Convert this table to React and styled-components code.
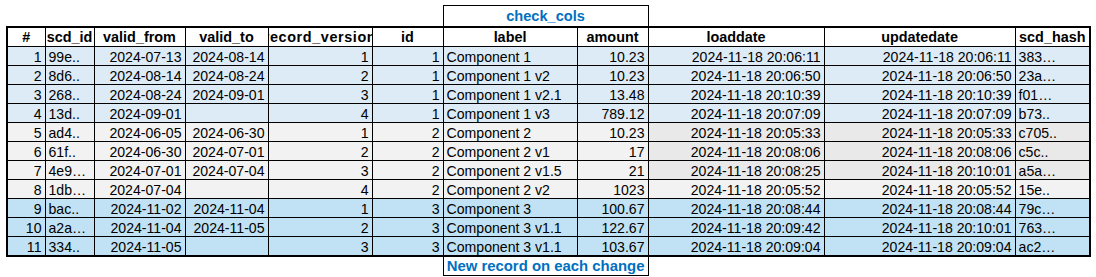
import React from 'react';
import styled, { createGlobalStyle } from 'styled-components';

const GlobalStyle = createGlobalStyle`
    body {
        margin: 0;
        background: #ffffff;
        font-family: "Liberation Sans", Arial, sans-serif;
    }
`;

const columns = [
    { key: 'n', title: '#', width: 38, align: 'right' },
    { key: 'scd', title: 'scd_id', width: 49, align: 'left' },
    { key: 'from', title: 'valid_from', width: 91, align: 'right' },
    { key: 'to', title: 'valid_to', width: 83, align: 'right' },
    { key: 'ver', title: 'record_version', width: 104, align: 'right', tight: true },
    { key: 'id', title: 'id', width: 71, align: 'right' },
    { key: 'label', title: 'label', width: 134, align: 'left' },
    { key: 'amount', title: 'amount', width: 71, align: 'right' },
    { key: 'load', title: 'loaddate', width: 176, align: 'right' },
    { key: 'upd', title: 'updatedate', width: 191, align: 'right' },
    { key: 'hash', title: 'scd_hash', width: 75, align: 'left' },
];

const groupColors = {
    1: '#DDEBF7',
    2: '#F2F2F2',
    3: '#C0E2F4',
};

const d = '2024-11-18 ';

const rows = [
    ['99e..', '2024-07-13', '2024-08-14', 1, 1, 'Component 1', '10.23', d + '20:06:11', d + '20:06:11', '383…'],
    ['8d6..', '2024-08-14', '2024-08-24', 2, 1, 'Component 1 v2', '10.23', d + '20:06:50', d + '20:06:50', '23a…'],
    ['268..', '2024-08-24', '2024-09-01', 3, 1, 'Component 1 v2.1', '13.48', d + '20:10:39', d + '20:10:39', 'f01…'],
    ['13d..', '2024-09-01', '', 4, 1, 'Component 1 v3', '789.12', d + '20:07:09', d + '20:07:09', 'b73..'],
    ['ad4..', '2024-06-05', '2024-06-30', 1, 2, 'Component 2', '10.23', d + '20:05:33', d + '20:05:33', 'c705..'],
    ['61f..', '2024-06-30', '2024-07-01', 2, 2, 'Component 2 v1', '17', d + '20:08:06', d + '20:08:06', 'c5c..'],
    ['4e9…', '2024-07-01', '2024-07-04', 3, 2, 'Component 2 v1.5', '21', d + '20:08:25', d + '20:10:01', 'a5a…'],
    ['1db…', '2024-07-04', '', 4, 2, 'Component 2 v2', '1023', d + '20:05:52', d + '20:05:52', '15e..'],
    ['bac..', '2024-11-02', '2024-11-04', 1, 3, 'Component 3', '100.67', d + '20:08:44', d + '20:08:44', '79c…'],
    ['a2a…', '2024-11-04', '2024-11-05', 2, 3, 'Component 3 v1.1', '122.67', d + '20:09:42', d + '20:10:01', '763…'],
    ['334..', '2024-11-05', '', 3, 3, 'Component 3 v1.1', '103.67', d + '20:09:04', d + '20:09:04', 'ac2…'],
];

const tableWidth = columns.reduce((sum, col) => sum + col.width, 0) + 1;

const Page = styled.div`
    padding: 5px 0 0 6px;
`;

const Sheet = styled.table`
    width: ${props => props.$w}px;
    border-collapse: collapse;
    table-layout: fixed;
    border-spacing: 0;
    td, th {
        box-sizing: border-box;
    }
`;

const NoteRow = styled.tr`
    height: ${props => props.$h}px;
`;

const Blank = styled.td`
    padding: 0;
    border: none;
`;

const Note = styled.td`
    padding: 0;
    border: 1px solid #000;
    color: #0070C0;
    font-weight: 700;
    font-size: ${props => props.$size}px;
    text-align: center;
    vertical-align: middle;
    white-space: nowrap;
    overflow: hidden;
`;

const HeadRow = styled.tr`
    height: 20px;
`;

const Head = styled.th`
    padding: 0;
    border: 1px solid #000;
    border-top: 2px solid #000;
    border-left-width: ${props => props.$first ? 2 : 1}px;
    border-right-width: ${props => props.$last ? 2 : 1}px;
    font-size: 14.4px;
    font-weight: 700;
    color: #000;
    vertical-align: middle;
    overflow: hidden;
`;

const Clip = styled.div`
    display: flex;
    justify-content: center;
    overflow: hidden;
    white-space: nowrap;
    letter-spacing: ${props => props.$tight ? '0.6px' : 'normal'};
`;

const DataRow = styled.tr`
    height: 19px;
    background: ${props => props.$bg};
`;

const Cell = styled.td`
    padding: 0 3px 1px 3px;
    border: 1px solid #000;
    border-left-width: ${props => props.$first ? 2 : 1}px;
    border-right-width: ${props => props.$last ? 2 : 1}px;
    border-bottom-width: ${props => props.$bottom ? 2 : 1}px;
    background: ${props => props.$shade || 'transparent'};
    font-size: 14.1px;
    line-height: 13px;
    color: #000;
    text-align: ${props => props.$align};
    vertical-align: bottom;
    white-space: nowrap;
    overflow: hidden;
`;

const shadedCols = ['load', 'upd', 'hash'];

const App = () => {
    return (
        <Page>
            <GlobalStyle />
            <Sheet $w={tableWidth}>
                <colgroup>
                    {columns.map(col => (
                        <col key={col.key} style={{ width: col.width }} />
                    ))}
                </colgroup>
                <tbody>
                    <NoteRow $h={21}>
                        <Blank colSpan={6} />
                        <Note colSpan={2} $size={14.6}>check_cols</Note>
                        <Blank colSpan={3} />
                    </NoteRow>
                    <HeadRow>
                        {columns.map((col, i) => (
                            <Head key={col.key} $first={i === 0} $last={i === columns.length - 1}>
                                <Clip $tight={col.tight}>{col.title}</Clip>
                            </Head>
                        ))}
                    </HeadRow>
                    {rows.map((row, r) => {
                        const group = row[4];
                        const values = [r + 1, ...row];
                        return (
                            <DataRow key={r} $bg={groupColors[group]}>
                                {columns.map((col, i) => (
                                    <Cell
                                        key={col.key}
                                        $align={col.align}
                                        $first={i === 0}
                                        $last={i === columns.length - 1}
                                        $bottom={r === rows.length - 1}
                                        $shade={group === 2 && r < 7 && shadedCols.includes(col.key) ? '#E9E9E9' : null}
                                    >
                                        {values[i]}
                                    </Cell>
                                ))}
                            </DataRow>
                        );
                    })}
                    <NoteRow $h={20}>
                        <Blank colSpan={6} />
                        <Note colSpan={2} $size={14.9}>New record on each change</Note>
                        <Blank colSpan={3} />
                    </NoteRow>
                </tbody>
            </Sheet>
        </Page>
    );
};

export default App;
